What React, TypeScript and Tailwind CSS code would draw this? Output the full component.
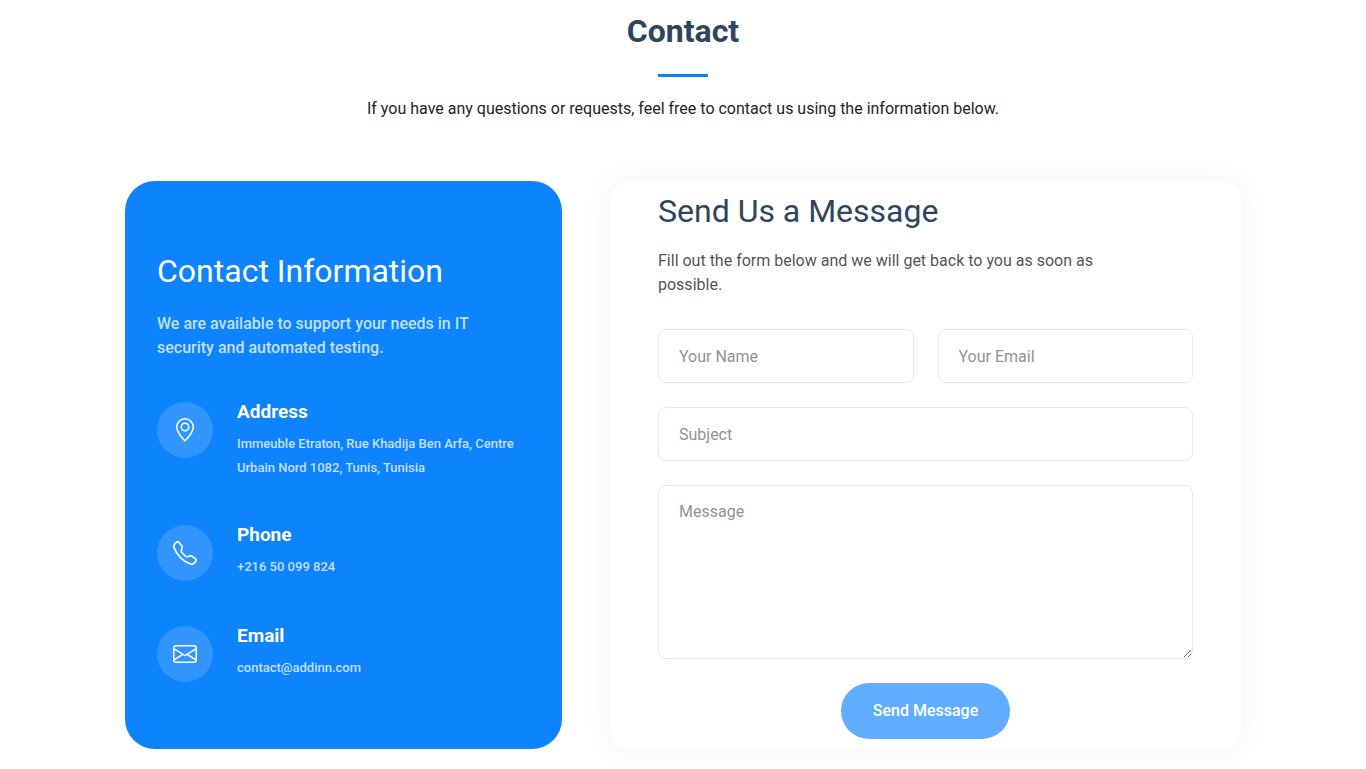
import { BsEnvelope, BsGeoAlt, BsTelephone } from "react-icons/bs";
import type { IconType } from "react-icons";

type ContactItem = { icon: IconType; title: string; text: string };

const items: ContactItem[] = [
  {
    icon: BsGeoAlt,
    title: "Address",
    text: "Immeuble Etraton, Rue Khadija Ben Arfa, Centre Urbain Nord 1082, Tunis, Tunisia",
  },
  { icon: BsTelephone, title: "Phone", text: "+216 50 099 824" },
  { icon: BsEnvelope, title: "Email", text: "contact@addinn.com" },
];

const fieldClass =
  "block w-full rounded-lg border border-[#e8e9ea] bg-white px-5 text-base text-[#212529] placeholder:text-[#929292] placeholder:opacity-100 outline-none focus:border-[#0d83fd]";

function InfoRow({ icon: Icon, title, text }: ContactItem) {
  return (
    <div className="flex items-start gap-6">
      <div className="flex size-14 shrink-0 items-center justify-center rounded-full bg-white/15 text-white">
        <Icon className="size-6" aria-hidden="true" />
      </div>
      <div className="min-w-0">
        <h4 className="mb-2.5 text-[19px] leading-5 font-bold text-white">{title}</h4>
        <p className="text-[13px] leading-6 font-medium text-white/75">{text}</p>
      </div>
    </div>
  );
}

export default function App() {
  return (
    <section className="bg-white pb-5 font-[Roboto,sans-serif] text-[#212529]">
      <header className="flex flex-col items-center px-3 pt-3 text-center">
        <h2 className="text-[32px] leading-[38px] font-bold text-[#2d465e]">Contact</h2>
        <div className="mt-6 h-[3px] w-[50px] bg-[#0d83fd]" />
        <p className="mt-5 text-base leading-6">
          If you have any questions or requests, feel free to contact us using the information below.
        </p>
      </header>

      <div className="mx-auto mt-15 grid max-w-[1140px] grid-cols-1 gap-12 px-3 lg:grid-cols-[437fr_631fr]">
        <div className="rounded-[30px] bg-[#0d83fd] px-8 pt-[70px] pb-[67px]">
          <h3 className="text-[32px] leading-10 text-white">Contact Information</h3>
          <p className="mt-[21px] max-w-[340px] text-base leading-6 font-medium text-white/75">
            We are available to support your needs in IT security and automated testing.
          </p>
          <div className="mt-[42px] flex flex-col gap-[45px]">
            {items.map((item) => (
              <InfoRow key={item.title} {...item} />
            ))}
          </div>
        </div>

        <div className="rounded-[20px] bg-white px-12 pt-2.5 pb-2.5 shadow-[0_0_30px_rgba(0,0,0,0.05)]">
          <h3 className="text-[32px] leading-10 text-[#2d465e]">Send Us a Message</h3>
          <p className="mt-[18px] max-w-[480px] text-base leading-6 text-[#212529]/80">
            Fill out the form below and we will get back to you as soon as possible.
          </p>
          <form className="mt-8 grid grid-cols-2 gap-6" onSubmit={(e) => e.preventDefault()}>
            <input className={`${fieldClass} h-[54px]`} type="text" name="name" aria-label="Your Name" placeholder="Your Name" />
            <input className={`${fieldClass} h-[54px]`} type="email" name="email" aria-label="Your Email" placeholder="Your Email" />
            <input className={`${fieldClass} col-span-2 h-[54px]`} type="text" name="subject" aria-label="Subject" placeholder="Subject" />
            <textarea className={`${fieldClass} col-span-2 h-[174px] resize-y py-3.5 leading-6`} name="message" aria-label="Message" placeholder="Message" />
            <button type="submit" className="col-span-2 h-14 justify-self-center rounded-full bg-[#60acfe] px-8 text-base font-medium text-white">
              Send Message
            </button>
          </form>
        </div>
      </div>
    </section>
  );
}
